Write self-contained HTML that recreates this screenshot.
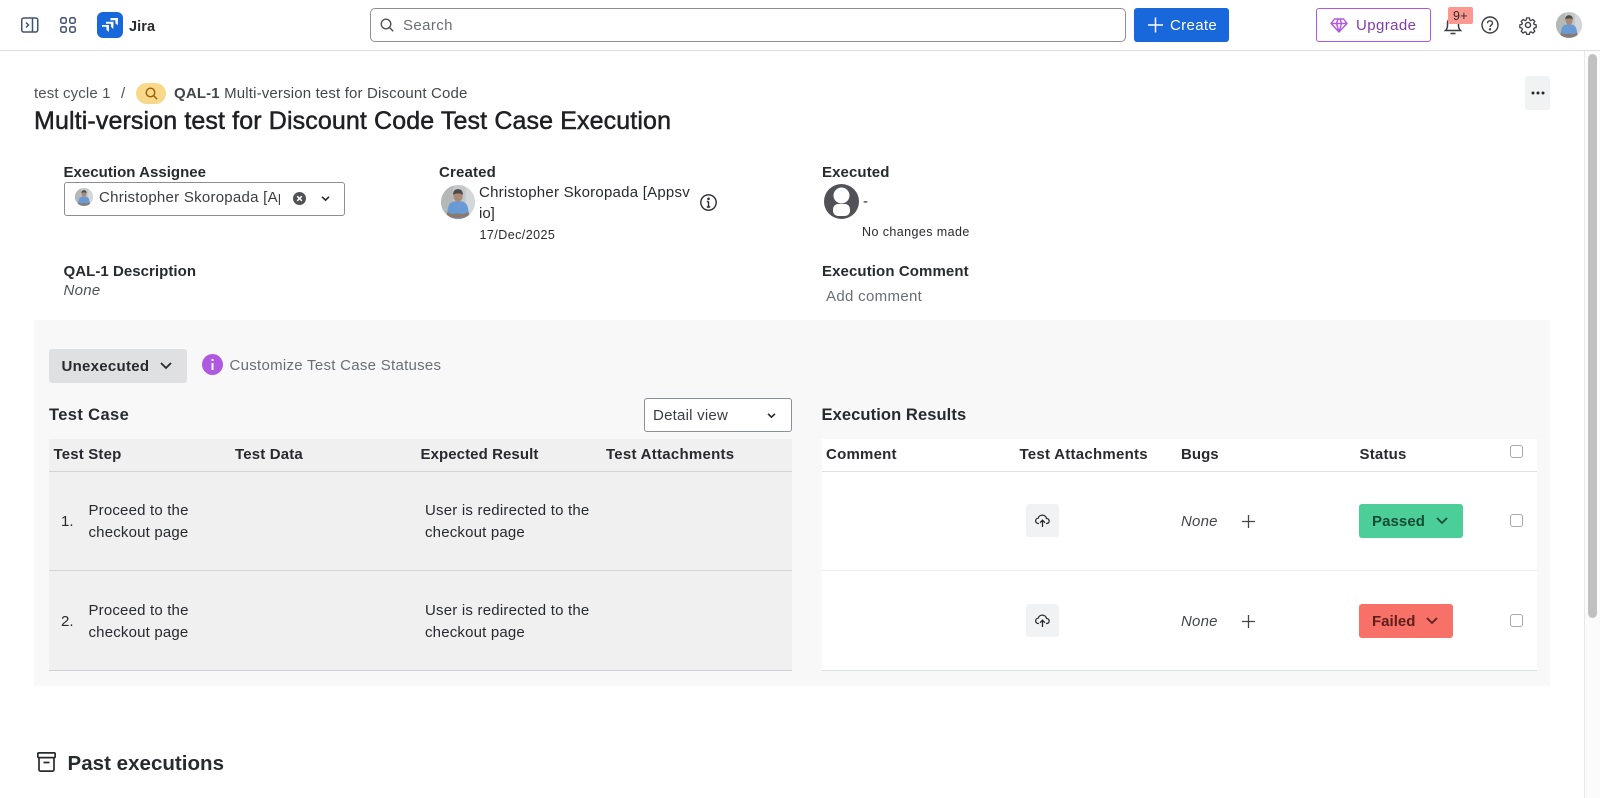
<!DOCTYPE html>
<html lang="en">
<head>
<meta charset="utf-8">
<title>Test Case Execution</title>
<style>
html,body{margin:0;padding:0;width:1600px;height:798px;overflow:hidden;background:#fff}
body{position:relative;font-family:"Liberation Sans",sans-serif;color:#292a2e;font-size:15px}
.a{position:absolute}
.t{position:absolute;white-space:nowrap;line-height:20px;transform:translateY(-50%)}
.b{font-weight:700}
.i{font-style:italic}
svg{position:absolute;overflow:visible}
.ck{position:absolute;left:1510px;width:11px;height:11px;border:1.5px solid #a5a8ad;border-radius:3px;background:#fff}
.up{position:absolute;left:1026px;width:33px;height:33px;background:#f1f2f4;border-radius:3px}
</style>
</head>
<body>
<!-- top bar -->
<div class="a" style="left:0;top:50px;width:1600px;height:1px;background:#dddee1"></div>
<svg style="left:21px;top:17px" width="18" height="16" viewBox="0 0 18 16" fill="none" stroke="#44546f" stroke-width="1.5"><rect x=".75" y="1" width="16" height="14" rx="2"/><path d="M11.5 1v14M5 5.5 7.5 8 5 10.5"/></svg>
<svg style="left:60px;top:17px" width="16" height="16" viewBox="0 0 16 16" fill="none" stroke="#44546f" stroke-width="1.5"><rect x=".75" y=".75" width="5.5" height="5.5" rx="1.8"/><rect x="9.75" y=".75" width="5.5" height="5.5" rx="1.8"/><rect x=".75" y="9.75" width="5.5" height="5.5" rx="1.8"/><rect x="9.75" y="9.75" width="5.5" height="5.5" rx="1.8"/></svg>
<svg style="left:97px;top:12px" width="26" height="26" viewBox="0 0 26 26"><rect width="26" height="26" rx="6" fill="#1868db"/><path d="M5 13h7l-.2 7-2.300-2.200-.1-3H5zM9 9.800h7.500l-.2 7.200-2.300-2.200-.1-3H9zM13.500 6H21l-.2 7.400-2.300-2.200-.1-3h-4.900z" fill="#fff"/></svg>
<span class="t b" style="left:129px;top:27px;font-size:14.5px;letter-spacing:.1px">Jira</span>

<div class="a" style="left:370px;top:8px;width:754px;height:32px;border:1px solid #8c8f97;border-radius:5px;background:#fff"></div>
<svg style="left:380px;top:18px" width="14" height="14" viewBox="0 0 14 14" fill="none" stroke="#505258" stroke-width="1.4"><circle cx="6" cy="6" r="4.8"/><path d="m9.500 9.500 3.700 3.700"/></svg>
<span class="t" style="left:403px;top:26px;color:#6b6e76;letter-spacing:.38px">Search</span>

<div class="a" style="left:1134px;top:8px;width:95px;height:34px;background:#1868db;border-radius:3px"></div>
<svg style="left:1148px;top:17px" width="15" height="16" viewBox="0 0 15 16" fill="none" stroke="#fff" stroke-width="1.5"><path d="M7.500 .5v15M0 8h15"/></svg>
<span class="t" style="left:1170px;top:26px;color:#fff;letter-spacing:.35px">Create</span>

<div class="a" style="left:1316px;top:8px;width:113px;height:32px;border:1px solid #af59e1;border-radius:3px;background:#fff"></div>
<svg style="left:1330px;top:18px" width="18" height="15" viewBox="0 0 18 15" fill="none" stroke="#af59e1" stroke-width="1.4" stroke-linejoin="round"><path d="M4.500 1h9L17 5.500 9 14 1 5.500zM1 5.500h16M6.500 5.500 9 14l2.500-8.500M6.500 5.500 8 1M11.500 5.500 10 1"/></svg>
<span class="t" style="left:1356px;top:26px;color:#803fa5;letter-spacing:.4px">Upgrade</span>

<svg style="left:1444px;top:16px" width="18" height="19" viewBox="0 0 18 19" fill="none" stroke="#3b3d42" stroke-width="1.5"><path d="M1.500 14.500c1.500-1.500 2-2.500 2-5V7a5.500 5.500 0 0 1 11 0v2.500c0 2.500.5 3.500 2 5zM6.500 17.500h5"/></svg>
<div class="a" style="left:1448px;top:7px;width:25px;height:17px;background:#fd9891;border-radius:2px"></div>
<span class="t" style="left:1453px;top:16px;font-size:12.5px;color:#292a2e;letter-spacing:.3px">9+</span>
<svg style="left:1481px;top:16px" width="18" height="18" viewBox="0 0 18 18" fill="none" stroke="#3b3d42" stroke-width="1.4"><circle cx="9" cy="9" r="8"/><path d="M6.500 7.200C6.500 5.700 7.700 4.800 9 4.800s2.500.9 2.500 2.300c0 2-2.500 2-2.500 3.900"/><circle cx="9" cy="13.300" r=".5" fill="#3b3d42"/></svg>
<svg style="left:1519px;top:16px" width="18" height="18" viewBox="0 0 24 24" fill="none" stroke="#3b3d42" stroke-width="1.9" stroke-linejoin="round"><circle cx="12" cy="12" r="3.400"/><path d="M10 1.500h4l.7 3.200 1.800.8 2.800-1.800 2.800 2.800-1.800 2.800.8 1.800 3 .7v4l-3 .7-.8 1.800 1.800 2.800-2.800 2.800-2.800-1.800-1.800.8-.7 3h-4l-.7-3-1.800-.8-2.800 1.800-2.800-2.800 1.800-2.800-.8-1.800-3-.7v-4l3-.7.8-1.800-1.800-2.800 2.800-2.800 2.800 1.800 1.800-.8z" transform="translate(1.200 1.200) scale(.9)"/></svg>
<svg style="left:1556px;top:12px" width="26" height="26" viewBox="0 0 26 26"><defs><clipPath id="c1"><circle cx="13" cy="13" r="13"/></clipPath></defs><g clip-path="url(#c1)"><rect width="26" height="26" fill="#c3c8cb"/><rect x="0" y="0" width="9" height="26" fill="#b4b8b6"/><rect x="19" y="0" width="7" height="26" fill="#d3d7da"/><path d="M5 26c-.500-8 .5-12.500 5-13.500h6c4.500 1 5.500 5.500 5 13.500z" fill="#689ad6"/><ellipse cx="13" cy="8.500" rx="3.600" ry="4.400" fill="#a98a77"/><path d="M9.200 7.500c0-3 1.500-4.300 3.800-4.300s3.800 1.300 3.800 4.300c-2-1.500-5.500-1.500-7.600 0z" fill="#4e4a49"/><path d="M5 20.500c3 2 5 2 8 1 3 1 5 1 8-1l1 3c-3 2.500-15 2.500-18 0z" fill="#8b7a70"/></g></svg>

<!-- scrollbar -->
<div class="a" style="left:1584px;top:51px;width:16px;height:747px;background:#fbfbfb;border-left:1px solid #e8e8e8;box-sizing:border-box"></div>
<div class="a" style="left:1588px;top:54px;width:9px;height:564px;background:#c1c1c1;border-radius:5px"></div>

<!-- breadcrumb -->
<span class="t" style="left:34px;top:94px;color:#505258;letter-spacing:.13px">test cycle 1</span>
<span class="t" style="left:121px;top:94px;color:#505258">/</span>
<div class="a" style="left:136px;top:83px;width:30px;height:21px;background:#f8d98b;border-radius:11px"></div>
<svg style="left:145px;top:87px" width="13" height="13" viewBox="0 0 13 13" fill="none" stroke="#9e5b00" stroke-width="1.4"><circle cx="5.500" cy="5.500" r="4.300"/><path d="m8.700 8.700 3.400 3.400"/></svg>
<span class="t" style="left:174px;top:94px;color:#44464c;letter-spacing:.16px"><span class="b">QAL-1</span> Multi-version test for Discount Code</span>
<span class="t" style="left:34px;top:121px;font-size:25px;letter-spacing:.12px;color:#1f2024;-webkit-text-stroke:.5px #1f2024;line-height:30px">Multi-version test for Discount Code Test Case Execution</span>
<div class="a" style="left:1525px;top:76px;width:25px;height:34px;background:#f1f2f4;border-radius:3px"></div>
<svg style="left:1531px;top:91px" width="14" height="4" viewBox="0 0 14 4" fill="#292a2e"><circle cx="2" cy="2" r="1.5"/><circle cx="7" cy="2" r="1.5"/><circle cx="12" cy="2" r="1.5"/></svg>

<!-- details -->
<span class="t b" style="left:63.5px;top:173px;letter-spacing:.03px">Execution Assignee</span>
<div class="a" style="left:64px;top:182px;width:279px;height:32px;border:1px solid #8c8f97;border-radius:3px;background:#fff"></div>
<svg style="left:75px;top:188px" width="18" height="18" viewBox="0 0 26 26"><defs><clipPath id="c2"><circle cx="13" cy="13" r="13"/></clipPath></defs><g clip-path="url(#c2)"><rect width="26" height="26" fill="#c3c8cb"/><rect x="0" y="0" width="9" height="26" fill="#b4b8b6"/><rect x="19" y="0" width="7" height="26" fill="#d3d7da"/><path d="M5 26c-.500-8 .5-12.500 5-13.500h6c4.500 1 5.500 5.500 5 13.500z" fill="#689ad6"/><ellipse cx="13" cy="8.500" rx="3.600" ry="4.400" fill="#a98a77"/><path d="M9.200 7.500c0-3 1.500-4.300 3.800-4.300s3.800 1.300 3.800 4.300c-2-1.500-5.500-1.500-7.600 0z" fill="#4e4a49"/><path d="M5 20.500c3 2 5 2 8 1 3 1 5 1 8-1l1 3c-3 2.500-15 2.500-18 0z" fill="#8b7a70"/></g></svg>
<div class="a" style="left:99px;top:187px;width:181px;height:22px;overflow:hidden"><span class="t" style="left:0;top:11px;color:#3b3d42;letter-spacing:.26px">Christopher Skoropada [Appsvio]</span></div>
<svg style="left:293px;top:192px" width="13" height="13" viewBox="0 0 13 13"><circle cx="6.500" cy="6.500" r="6.500" fill="#505258"/><path d="m4.200 4.200 4.600 4.600m0-4.600L4.200 8.800" stroke="#fff" stroke-width="1.5"/></svg>
<svg style="left:321px;top:196px" width="9" height="5" viewBox="0 0 9 5" fill="none" stroke="#292a2e" stroke-width="1.6"><path d="m1 .8 3.500 3.300L8 .8"/></svg>

<span class="t b" style="left:439px;top:173px;letter-spacing:.15px">Created</span>
<svg style="left:441px;top:185px" width="34" height="34" viewBox="0 0 26 26"><defs><clipPath id="c3"><circle cx="13" cy="13" r="13"/></clipPath></defs><g clip-path="url(#c3)"><rect width="26" height="26" fill="#c3c8cb"/><rect x="0" y="0" width="9" height="26" fill="#b4b8b6"/><rect x="19" y="0" width="7" height="26" fill="#d3d7da"/><path d="M5 26c-.500-8 .5-12.500 5-13.500h6c4.500 1 5.500 5.500 5 13.500z" fill="#689ad6"/><ellipse cx="13" cy="8.500" rx="3.600" ry="4.400" fill="#a98a77"/><path d="M9.200 7.500c0-3 1.500-4.300 3.800-4.300s3.800 1.300 3.800 4.300c-2-1.500-5.500-1.500-7.600 0z" fill="#4e4a49"/><path d="M5 20.500c3 2 5 2 8 1 3 1 5 1 8-1l1 3c-3 2.500-15 2.500-18 0z" fill="#8b7a70"/></g></svg>
<span class="t" style="left:479px;top:193px;letter-spacing:.24px">Christopher Skoropada [Appsv</span>
<span class="t" style="left:479px;top:214px">io]</span>
<span class="t" style="left:479.5px;top:234.5px;font-size:12.5px;letter-spacing:.45px">17/Dec/2025</span>
<svg style="left:700px;top:194px" width="17" height="17" viewBox="0 0 17 17" fill="none" stroke="#292a2e" stroke-width="1.4"><circle cx="8.500" cy="8.500" r="7.700"/><path d="M8.500 7.500V13M6.800 7.500h1.700M6.800 13h3.400"/><circle cx="8.500" cy="4.800" r=".6" fill="#292a2e"/></svg>

<span class="t b" style="left:822px;top:173px;letter-spacing:.1px">Executed</span>
<svg style="left:824px;top:184px" width="35" height="35" viewBox="0 0 35 35"><circle cx="17.500" cy="17.500" r="17.500" fill="#505258"/><circle cx="17.500" cy="11.500" r="8" fill="#fff"/><rect x="9" y="20" width="17" height="12" rx="5" fill="#fff"/></svg>
<span class="t" style="left:863px;top:202px">-</span>
<span class="t" style="left:862px;top:232px;font-size:12.5px;letter-spacing:.42px">No changes made</span>

<span class="t b" style="left:63.5px;top:272px;letter-spacing:.05px">QAL-1 Description</span>
<span class="t i" style="left:63.5px;top:291px;color:#505258;letter-spacing:.3px">None</span>
<span class="t b" style="left:822px;top:272px;letter-spacing:.1px">Execution Comment</span>
<span class="t" style="left:826px;top:297px;color:#6b6e76;letter-spacing:.33px">Add comment</span>

<!-- panel -->
<div class="a" style="left:34px;top:320px;width:1516px;height:366px;background:#f8f8f8"></div>
<div class="a" style="left:49px;top:349px;width:138px;height:34px;background:#dfe0e2;border-radius:3px"></div>
<span class="t b" style="left:61.5px;top:367px;letter-spacing:.28px">Unexecuted</span>
<svg style="left:159.5px;top:362px" width="12" height="7" viewBox="0 0 12 7" fill="none" stroke="#292a2e" stroke-width="1.8"><path d="m1 1 5 5 5-5"/></svg>
<svg style="left:202px;top:354px" width="21" height="21" viewBox="0 0 21 21"><circle cx="10.500" cy="10.500" r="10.500" fill="#af59e1"/><path d="M9.500 9h2v7h-2zM9.500 5h2v2h-2z" fill="#fff"/></svg>
<span class="t" style="left:229.5px;top:365.5px;color:#6b6e76;letter-spacing:.28px">Customize Test Case Statuses</span>

<span class="t b" style="left:49px;top:415px;font-size:16.5px;letter-spacing:.38px">Test Case</span>
<div class="a" style="left:644px;top:398px;width:146px;height:32px;border:1px solid #8c8f97;border-radius:3px;background:#fff"></div>
<span class="t" style="left:653px;top:416px;color:#3b3d42;letter-spacing:.23px">Detail view</span>
<svg style="left:767px;top:413px" width="9" height="5" viewBox="0 0 9 5" fill="none" stroke="#292a2e" stroke-width="1.6"><path d="m1 .8 3.500 3.300L8 .8"/></svg>

<!-- left table -->
<div class="a" style="left:49px;top:439px;width:743px;height:232px;background:#f0f0f0"></div>
<div class="a" style="left:49px;top:471px;width:743px;height:1px;background:#d3d4d7"></div>
<div class="a" style="left:49px;top:570px;width:743px;height:1px;background:#d3d4d7"></div>
<div class="a" style="left:49px;top:670px;width:743px;height:1px;background:#cfd0d3"></div>
<span class="t b" style="left:53.5px;top:455px;letter-spacing:.17px">Test Step</span>
<span class="t b" style="left:235px;top:455px;letter-spacing:.17px">Test Data</span>
<span class="t b" style="left:420.5px;top:455px;letter-spacing:.08px">Expected Result</span>
<span class="t b" style="left:606px;top:455px;letter-spacing:.26px">Test Attachments</span>
<span class="t" style="left:61px;top:522px">1.</span>
<span class="t" style="left:88.5px;top:511px;letter-spacing:.18px">Proceed to the</span>
<span class="t" style="left:88.5px;top:533px;letter-spacing:.18px">checkout page</span>
<span class="t" style="left:425px;top:511px;letter-spacing:.21px">User is redirected to the</span>
<span class="t" style="left:425px;top:533px;letter-spacing:.18px">checkout page</span>
<span class="t" style="left:61px;top:622px">2.</span>
<span class="t" style="left:88.5px;top:611px;letter-spacing:.18px">Proceed to the</span>
<span class="t" style="left:88.5px;top:633px;letter-spacing:.18px">checkout page</span>
<span class="t" style="left:425px;top:611px;letter-spacing:.21px">User is redirected to the</span>
<span class="t" style="left:425px;top:633px;letter-spacing:.18px">checkout page</span>

<!-- right table -->
<span class="t b" style="left:821.5px;top:415px;font-size:16.5px;letter-spacing:.1px">Execution Results</span>
<div class="a" style="left:822px;top:439px;width:715px;height:232px;background:#fff"></div>
<div class="a" style="left:822px;top:471px;width:715px;height:1px;background:#dcdfe4"></div>
<div class="a" style="left:822px;top:570px;width:715px;height:1px;background:#eceef0"></div>
<div class="a" style="left:822px;top:670px;width:715px;height:1px;background:#dcdfe4"></div>
<span class="t b" style="left:826px;top:455px;letter-spacing:.23px">Comment</span>
<span class="t b" style="left:1019.5px;top:455px;letter-spacing:.26px">Test Attachments</span>
<span class="t b" style="left:1181px;top:455px;letter-spacing:.05px">Bugs</span>
<span class="t b" style="left:1359.5px;top:455px;letter-spacing:.2px">Status</span>
<div class="ck" style="top:445px"></div>

<div class="up" style="top:504px"></div>
<svg style="left:1035px;top:514px" width="15" height="14" viewBox="0 0 15 14" fill="none" stroke="#292a2e" stroke-width="1.3"><path d="M4 9.500H3.500a2.700 2.700 0 0 1-.3-5.400 4.300 4.300 0 0 1 8.300.4 2.500 2.500 0 0 1 .3 5H11M7.500 13V6.500M5 8.700l2.500-2.500L10 8.700"/></svg>
<span class="t i" style="left:1181px;top:522px;color:#44464c;letter-spacing:.2px">None</span>
<svg style="left:1241.5px;top:514.5px" width="13" height="13" viewBox="0 0 13 13" stroke="#44464c" stroke-width="1.3"><path d="M6.500 0v13M0 6.500h13"/></svg>
<div class="a" style="left:1359px;top:504px;width:104px;height:34px;background:#4bce97;border-radius:3px"></div>
<span class="t b" style="left:1372px;top:522px;color:#164b35;letter-spacing:.08px">Passed</span>
<svg style="left:1436px;top:517px" width="12" height="7" viewBox="0 0 12 7" fill="none" stroke="#164b35" stroke-width="1.8"><path d="m1 1 5 5 5-5"/></svg>
<div class="ck" style="top:514px"></div>

<div class="up" style="top:604px"></div>
<svg style="left:1035px;top:614px" width="15" height="14" viewBox="0 0 15 14" fill="none" stroke="#292a2e" stroke-width="1.3"><path d="M4 9.500H3.500a2.700 2.700 0 0 1-.3-5.400 4.300 4.300 0 0 1 8.300.4 2.500 2.500 0 0 1 .3 5H11M7.500 13V6.500M5 8.700l2.500-2.500L10 8.700"/></svg>
<span class="t i" style="left:1181px;top:622px;color:#44464c;letter-spacing:.2px">None</span>
<svg style="left:1241.5px;top:614.5px" width="13" height="13" viewBox="0 0 13 13" stroke="#44464c" stroke-width="1.3"><path d="M6.500 0v13M0 6.500h13"/></svg>
<div class="a" style="left:1359px;top:604px;width:94px;height:34px;background:#f87168;border-radius:3px"></div>
<span class="t b" style="left:1372px;top:622px;color:#5d1f1a;letter-spacing:.02px">Failed</span>
<svg style="left:1426px;top:617px" width="12" height="7" viewBox="0 0 12 7" fill="none" stroke="#5d1f1a" stroke-width="1.8"><path d="m1 1 5 5 5-5"/></svg>
<div class="ck" style="top:614px"></div>

<!-- past executions -->
<svg style="left:37px;top:752px" width="19" height="20" viewBox="0 0 19 20" fill="none" stroke="#292a2e" stroke-width="1.7"><rect x=".85" y=".85" width="17.300" height="4.800" rx="1"/><path d="M2 5.600v12a1.500 1.500 0 0 0 1.500 1.500h12a1.500 1.500 0 0 0 1.500-1.500v-12M6.500 10.500h6"/></svg>
<span class="t b" style="left:67.5px;top:764px;font-size:20.5px;letter-spacing:.03px;line-height:26px">Past executions</span>
</body>
</html>
